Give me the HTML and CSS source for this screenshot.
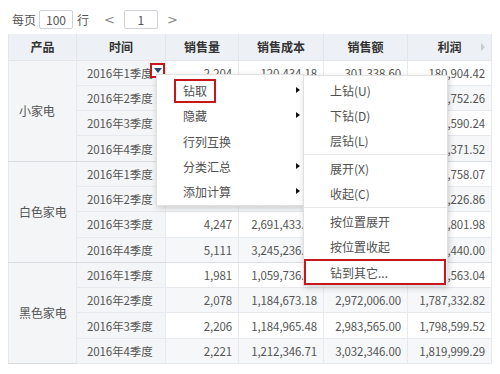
FILE: index.html
```html
<!DOCTYPE html>
<html>
<head>
<meta charset="utf-8">
<link rel="stylesheet" href="styles.css">
</head>
<body>
<div class="page">
  <div class="toolbar">
    <span class="lbl">每页</span>
    <span class="box box-size">100</span>
    <span class="lbl">行</span>
    <span class="pg prev">&lt;</span>
    <span class="box box-page">1</span>
    <span class="pg next">&gt;</span>
  </div>
  <div class="grid-wrap">
    <table class="grid">
      <colgroup>
        <col class="c1"><col class="c2"><col class="c3"><col class="c4"><col class="c5"><col class="c6">
      </colgroup>
      <thead>
        <tr><th>产品</th><th>时间</th><th>销售量</th><th>销售成本</th><th>销售额</th><th class="last">利润<span class="more"></span></th></tr>
      </thead>
      <tbody>
        <tr class="odd"><td class="prod" rowspan="4">小家电</td><td class="time first-time">2016年1季度<span class="dd"><span class="tri"></span></span></td><td>2,204</td><td>120,434.18</td><td>301,338.60</td><td>180,904.42</td></tr>
        <tr class="even"><td class="time">2016年2季度</td><td>2,173</td><td>118,327.60</td><td>290,079.86</td><td>171,752.26</td></tr>
        <tr class="odd"><td class="time">2016年3季度</td><td>2,215</td><td>120,745.16</td><td>304,335.40</td><td>183,590.24</td></tr>
        <tr class="even grp-end"><td class="time">2016年4季度</td><td>2,236</td><td>121,832.48</td><td>305,204.00</td><td>183,371.52</td></tr>
        <tr class="odd"><td class="prod" rowspan="4">白色家电</td><td class="time">2016年1季度</td><td>4,115</td><td>2,602,348.93</td><td>6,284,107.00</td><td>3,681,758.07</td></tr>
        <tr class="even"><td class="time">2016年2季度</td><td>4,193</td><td>2,655,873.14</td><td>6,414,100.00</td><td>3,758,226.86</td></tr>
        <tr class="odd"><td class="time">2016年3季度</td><td>4,247</td><td>2,691,433.02</td><td>6,495,235.00</td><td>3,803,801.98</td></tr>
        <tr class="even grp-end"><td class="time">2016年4季度</td><td>5,111</td><td>3,245,236.00</td><td>7,826,676.00</td><td>4,581,440.00</td></tr>
        <tr class="odd"><td class="prod" rowspan="4">黑色家电</td><td class="time">2016年1季度</td><td>1,981</td><td>1,059,736.96</td><td>2,826,300.00</td><td>1,766,563.04</td></tr>
        <tr class="even"><td class="time">2016年2季度</td><td>2,078</td><td>1,184,673.18</td><td>2,972,006.00</td><td>1,787,332.82</td></tr>
        <tr class="odd"><td class="time">2016年3季度</td><td>2,206</td><td>1,184,965.48</td><td>2,983,565.00</td><td>1,798,599.52</td></tr>
        <tr class="even"><td class="time">2016年4季度</td><td>2,221</td><td>1,212,346.71</td><td>3,032,346.00</td><td>1,819,999.29</td></tr>
      </tbody>
    </table>
  </div>

  <div class="menu menu-main">
    <div class="item has-sub"><span class="hl">钻取</span></div>
    <div class="item has-sub"><span class="txt">隐藏</span></div>
    <div class="item"><span class="txt">行列互换</span></div>
    <div class="item has-sub"><span class="txt">分类汇总</span></div>
    <div class="item has-sub"><span class="txt">添加计算</span></div>
  </div>
  <div class="menu menu-sub">
    <div class="sitem">上钻(U)</div>
    <div class="sitem">下钻(D)</div>
    <div class="sitem">层钻(L)</div>
    <div class="sep"></div>
    <div class="sitem">展开(X)</div>
    <div class="sitem">收起(C)</div>
    <div class="sep"></div>
    <div class="sitem">按位置展开</div>
    <div class="sitem">按位置收起</div>
    <div class="sitem boxed">钻到其它...</div>
  </div>
</div>
</body>
</html>
```

FILE: styles.css
```css
* { box-sizing: border-box; }
html, body { margin: 0; padding: 0; background: #fff; }
body {
  font-family: "Noto Sans CJK SC", "Noto Sans", "DejaVu Sans", sans-serif;
  font-size: 12px;
  color: #555;
}
.page { position: relative; width: 500px; height: 374px; overflow: hidden; }

.toolbar {
  display: flex;
  align-items: center;
  height: 38px;
  padding: 0 0 0 12px;
}
.lbl { color: #555; font-size: 12px; }
.box {
  display: inline-flex;
  align-items: center;
  justify-content: center;
  height: 19px;
  border: 1px solid #cfd3d8;
  border-radius: 2px;
  color: #555;
  font-size: 12px;
}
.box-size { width: 34px; margin: 0 4px 0 3px; }
.box-page { width: 34px; margin: 0 9px 0 9px; }
.pg { color: #888; font-size: 13px; font-family: "DejaVu Sans", sans-serif; }
.prev { margin-left: 15px; }

.grid-wrap { padding-left: 8px; margin-top: -4px; }
.grid {
  border-collapse: collapse;
  table-layout: fixed;
  width: 483px;
}
.c1 { width: 68px; } .c2 { width: 89px; } .c3 { width: 73px; }
.c4 { width: 85px; } .c5 { width: 84px; } .c6 { width: 84px; }

.grid th {
  height: 26px;
  background: #edf0f4;
  color: #333;
  font-weight: bold;
  font-size: 12px;
  text-align: center;
  border: 1px solid #e2e5ea;
  border-top: none;
  padding: 0;
}
.grid th.last { position: relative; }
.more {
  position: absolute;
  right: 6px;
  top: 9px;
  width: 0; height: 0;
  border-left: 4px solid #c8ccd2;
  border-top: 4px solid transparent;
  border-bottom: 4px solid transparent;
}
.grid td {
  height: 25.3px;
  padding: 0 6px;
  text-align: right;
  border: 1px solid #e6e9ed;
  white-space: nowrap;
  overflow: hidden;
  color: #555;
  font-size: 11.5px;
  letter-spacing: -0.1px;
}
.grid tr.odd td { background: #fff; }
.grid tr.even td { background: #f5f7f9; }
.grid td.prod {
  background: #f4f5f7 !important;
  text-align: left;
  padding-left: 10px;
  border-bottom: 1px solid #d9dde2;
  font-size: 12px;
}
.grid td.time {
  background: #f4f5f7 !important;
  text-align: left;
  padding-left: 10px;
}
.grid tr.grp-end td { border-bottom: 1px solid #d9dde2; }
.grid td.first-time { position: relative; overflow: visible; }
.dd {
  position: absolute;
  left: 73px;
  top: 2px;
  width: 15px;
  height: 15px;
  border: 2px solid #c8161d;
  background: #fff;
}
.tri {
  position: absolute;
  left: 2px;
  top: 3px;
  width: 0; height: 0;
  border-top: 5px solid #2a4b6e;
  border-left: 4px solid transparent;
  border-right: 4px solid transparent;
}

.menu {
  position: absolute;
  background: #fff;
  border: 1px solid #e0e0e0;
  box-shadow: 1px 2px 6px rgba(0,0,0,0.18);
  color: #505050;
}
.menu-main {
  left: 156px;
  top: 74px;
  width: 148px;
  padding-top: 3px;
  padding-bottom: 1px;
}
.item {
  position: relative;
  height: 25.3px;
  display: flex;
  align-items: center;
  padding-left: 17px;
}
.item .txt { padding-left: 9px; }
.hl {
  display: inline-flex;
  align-items: center;
  height: 24px;
  padding: 0 7px;
  border: 2px solid #c8161d;
}
.has-sub::after {
  content: "";
  position: absolute;
  right: 3px;
  top: 9px;
  width: 0; height: 0;
  border-left: 4px solid #111;
  border-top: 3.5px solid transparent;
  border-bottom: 3.5px solid transparent;
}
.menu-sub {
  left: 303px;
  top: 75px;
  width: 145px;
  padding-top: 2px;
  padding-bottom: 0;
}
.sitem {
  height: 25px;
  display: flex;
  align-items: center;
  padding-left: 24px;
  border: 2px solid transparent;
}
.sitem.boxed { border-color: #c8161d; height: 26px; margin-right: 1px; }
.sep { height: 1px; background: #e8e8e8; margin: 1px 0; }
```
